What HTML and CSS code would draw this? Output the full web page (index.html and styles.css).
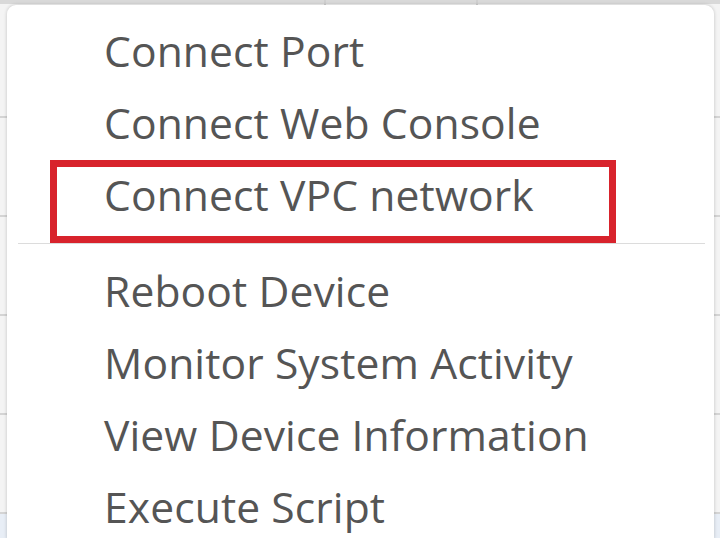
FILE: index.html
```html
<!DOCTYPE html>
<html>
<head>
<meta charset="utf-8">
<link rel="stylesheet" href="styles.css">
</head>
<body>
<div class="backdrop">
  <div class="bg-head">
    <span class="bg-col c1"></span><span class="bg-col c2"></span>
  </div>
  <div class="bg-row r1"></div>
  <div class="bg-row"></div>
  <div class="bg-row"></div>
  <div class="bg-row"></div>
  <div class="bg-row"></div>
  <div class="bg-row last"></div>
</div>
<div class="menu">
  <ul class="group">
    <li class="item">Connect Port</li>
    <li class="item">Connect Web Console</li>
    <li class="item highlighted">Connect VPC network<span class="mark"></span></li>
  </ul>
  <div class="separator"></div>
  <ul class="group">
    <li class="item">Reboot Device</li>
    <li class="item">Monitor System Activity</li>
    <li class="item">View Device Information</li>
    <li class="item">Execute Script</li>
  </ul>
</div>
</body>
</html>
```

FILE: styles.css
```css
html, body {
  margin: 0;
  padding: 0;
  width: 720px;
  height: 538px;
  overflow: hidden;
  background: #f3f3f3;
  font-family: "Open Sans", "Liberation Sans", sans-serif;
}

.backdrop {
  display: flex;
  flex-direction: column;
  height: 538px;
}

.bg-head {
  height: 4px;
  background: #d9d9d9;
  position: relative;
  flex: none;
}

.bg-col {
  position: absolute;
  top: 0;
  width: 2px;
  height: 14px;
  background: #cfcfcf;
}
.c1 { left: 324px; }
.c2 { left: 476px; }

.bg-row {
  flex: none;
  height: 97px;
  border-bottom: 2px solid #d4d4d4;
  background: #f4f4f4;
}
.bg-row.r1 { height: 112px; }
.bg-row.last {
  flex: 1 1 auto;
  height: auto;
  min-height: 0;
  border-bottom: none;
  background: #e8eef6;
}

.menu {
  position: absolute;
  left: 7px;
  top: 5px;
  width: 707px;
  height: 533px;
  overflow: hidden;
  background: #ffffff;
  border-radius: 9px 9px 0 0;
  box-shadow: 0 0 3px 1px rgba(0, 0, 0, 0.12);
  padding-top: 9px;
  box-sizing: border-box;
}

.group {
  list-style: none;
  margin: 0;
  padding: 0;
}

.item {
  position: relative;
  padding-left: 97px;
  font-size: 42.6px;
  line-height: 72px;
  height: 72px;
  color: #555555;
  letter-spacing: 0.1px;
  white-space: nowrap;
}

.mark {
  position: absolute;
  left: 43px;
  top: 2px;
  width: 552px;
  height: 69px;
  border: 7px solid #d8232c;
}

.separator {
  height: 1px;
  background: #dcdcdc;
  margin: 13px 9px 10px 11px;
}
```
